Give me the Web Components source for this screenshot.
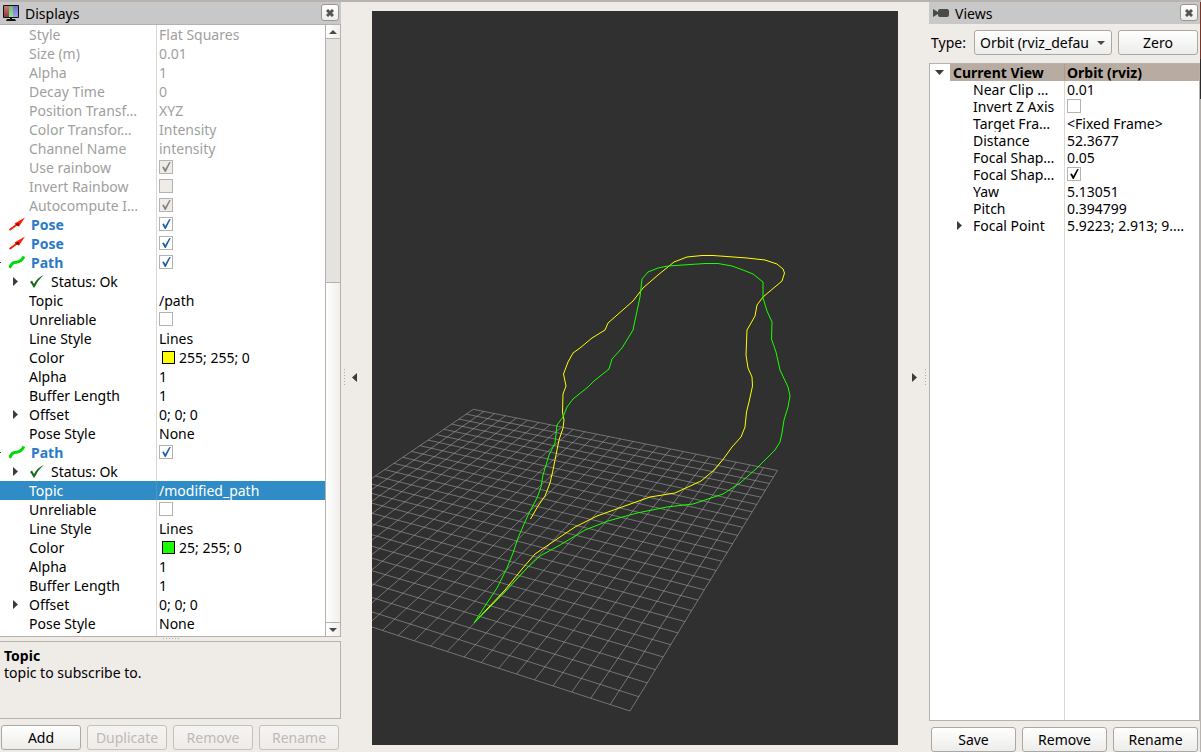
<!DOCTYPE html>
<html lang="en">
<head>
<meta charset="utf-8">
<title>RViz</title>
<style>
  html, body { margin: 0; height: 100%; }
  body {
    font: 14px/17px "Noto Sans", "Open Sans", sans-serif;
    color: #000;
    background: #efebe7;
    overflow: hidden;
  }
</style>
</head>
<body>
<rviz-window>
  <dock-panel slot="left" heading="Displays" icon="monitor" style="--dock-width: 341px">
    <property-tree scrollable label="Displays" style="--row: 19px; --name: 156px">
      <property-row off name="Style" value="Flat Squares"></property-row>
      <property-row off name="Size (m)" value="0.01"></property-row>
      <property-row off name="Alpha" value="1"></property-row>
      <property-row off name="Decay Time" value="0"></property-row>
      <property-row off name="Position Transf…" value="XYZ"></property-row>
      <property-row off name="Color Transfor…" value="Intensity"></property-row>
      <property-row off name="Channel Name" value="intensity"></property-row>
      <property-row off name="Use rainbow" check="on"></property-row>
      <property-row off name="Invert Rainbow" check="off"></property-row>
      <property-row off name="Autocompute I…" check="on"></property-row>
      <property-row display icon="pose" name="Pose" check="on"></property-row>
      <property-row display icon="pose" name="Pose" check="on"></property-row>
      <property-row display icon="path" name="Path" check="on" arrow="edge"></property-row>
      <property-row icon="ok" name="Status: Ok" arrow="closed"></property-row>
      <property-row name="Topic" value="/path"></property-row>
      <property-row name="Unreliable" check="off"></property-row>
      <property-row name="Line Style" value="Lines"></property-row>
      <property-row name="Color" value="255; 255; 0" swatch="#ffff00"></property-row>
      <property-row name="Alpha" value="1"></property-row>
      <property-row name="Buffer Length" value="1"></property-row>
      <property-row name="Offset" value="0; 0; 0" arrow="closed"></property-row>
      <property-row name="Pose Style" value="None"></property-row>
      <property-row display icon="path" name="Path" check="on" arrow="edge"></property-row>
      <property-row icon="ok" name="Status: Ok" arrow="closed"></property-row>
      <property-row selected name="Topic" value="/modified_path"></property-row>
      <property-row name="Unreliable" check="off"></property-row>
      <property-row name="Line Style" value="Lines"></property-row>
      <property-row name="Color" value="25; 255; 0" swatch="#19ff00"></property-row>
      <property-row name="Alpha" value="1"></property-row>
      <property-row name="Buffer Length" value="1"></property-row>
      <property-row name="Offset" value="0; 0; 0" arrow="closed"></property-row>
      <property-row name="Pose Style" value="None"></property-row>
    </property-tree>
    <help-box heading="Topic">topic to subscribe to.</help-box>
    <button-bar>
      <push-button>Add</push-button>
      <push-button disabled>Duplicate</push-button>
      <push-button disabled>Remove</push-button>
      <push-button disabled>Rename</push-button>
    </button-bar>
  </dock-panel>

  <side-handle slot="left" side="left"></side-handle>
  <scene-view></scene-view>
  <side-handle slot="right" side="right"></side-handle>

  <dock-panel slot="right" heading="Views" icon="camera" style="--dock-width: 271px">
    <view-type></view-type>
    <property-tree framed label="Views" style="--row: 17px; --name: 134px; --indent: 43px">
      <property-row root name="Current View" value="Orbit (rviz)" arrow="open"></property-row>
      <property-row name="Near Clip …" value="0.01"></property-row>
      <property-row name="Invert Z Axis" check="off"></property-row>
      <property-row name="Target Fra…" value="&lt;Fixed Frame&gt;"></property-row>
      <property-row name="Distance" value="52.3677"></property-row>
      <property-row name="Focal Shap…" value="0.05"></property-row>
      <property-row name="Focal Shap…" check="on" dark></property-row>
      <property-row name="Yaw" value="5.13051"></property-row>
      <property-row name="Pitch" value="0.394799"></property-row>
      <property-row name="Focal Point" value="5.9223; 2.913; 9.…" arrow="closed"></property-row>
    </property-tree>
    <button-bar inset>
      <push-button>Save</push-button>
      <push-button>Remove</push-button>
      <push-button>Rename</push-button>
    </button-bar>
  </dock-panel>
</rviz-window>

<script>
const ICONS = {
  monitor: `<svg width="16" height="16" viewBox="0 0 16 16"><defs><linearGradient id="r" x2="0" y2="1"><stop stop-color="#c87878"/><stop offset="1" stop-color="#8c3c3c"/></linearGradient><linearGradient id="g" x2="0" y2="1"><stop stop-color="#70b870"/><stop offset="1" stop-color="#90e890"/></linearGradient><linearGradient id="b" x2="0" y2="1"><stop stop-color="#7070c8"/><stop offset="1" stop-color="#a0a0f0"/></linearGradient></defs><rect width="16" height="13" rx="1" fill="#111"/><path fill="url(#r)" d="M1 1h5v11H1z"/><path fill="url(#g)" d="M6 1h4v11H6z"/><path fill="url(#b)" d="M10 1h5v11h-5z"/><path fill="#111" d="M7 13h2v1h3l1 2H3l1-2h3z"/></svg>`,
  camera: `<svg width="16" height="16" viewBox="0 0 16 16"><path fill="#4a4a4a" d="M0 4l5 3v2l-5 3zM7 4h7q2 0 2 2v4q0 2-2 2H7q-2 0-2-2V6q0-2 2-2z"/></svg>`,
  pose: `<svg width="16" height="16" viewBox="0 0 16 16"><path stroke="#f02000" stroke-width="2" d="M.5 13L8 7.500"/><path fill="#ff2000" d="M5.500 6.500L16 .5 10 9.500z"/><path fill="#900000" d="M6 7l4-1-.5 3.500z"/></svg>`,
  path: `<svg width="16" height="16" viewBox="0 0 16 16"><path fill="none" stroke="#00d80c" stroke-width="3" d="M.5 13C3 7.500 4 7.500 7.500 7.200S13 5.500 15 1.500"/></svg>`,
  ok: `<svg width="16" height="16" viewBox="0 0 16 16"><path fill="#1c6b1c" d="M1 8l2-1.500 2 3.500Q8 4 14.500 1 9 6 5.500 13.500H4.500Q3 10 1 8z"/></svg>`,
  closed: `<svg width="5" height="9" viewBox="0 0 5 9"><path fill="#3c3b37" d="M0 0l5 4.500L0 9z"/></svg>`,
  open: `<svg width="9" height="5" viewBox="0 0 9 5"><path fill="#3c3b37" d="M0 0h9L4.500 5z"/></svg>`,
  edge: `<svg width="1" height="1" viewBox="0 0 1 1"><path fill="#3c3b37" d="M0 0h1v1H0z"/></svg>`,
  up: `<svg width="8" height="4" viewBox="0 0 8 4"><path fill="#4a4944" d="M0 4h8L4 0z"/></svg>`,
  down: `<svg width="8" height="4" viewBox="0 0 8 4"><path fill="#4a4944" d="M0 0h8L4 4z"/></svg>`,
  cross: `<svg width="8" height="8" viewBox="0 0 8 8"><path stroke="#555" stroke-width="3" d="M1 1l6 6M7 1L1 7"/></svg>`
};

class Part extends HTMLElement {
  connectedCallback() {
    if (this.shadowRoot) return;
    this.attachShadow({ mode: 'open' }).innerHTML =
      `<style>*{box-sizing:border-box}svg{display:block;flex:none}${this.css()}</style>${this.html()}`;
  }
  get(n) { return (this.getAttribute(n) || '').replace(/&/g, '&amp;').replace(/</g, '&lt;'); }
  css() { return ''; }
  html() { return '<slot></slot>'; }
}

const BUTTON = `
  button, select {
    font: inherit; color: #000; margin: 0; height: 25px;
    border: 1px solid #aba7a3; border-radius: 3px;
    background: linear-gradient(#fff, #ececea);
  }`;

customElements.define('rviz-window', class extends Part {
  css() { return `
    :host { display: flex; height: 100vh; min-height: 700px; box-sizing: border-box; border-top: 2px solid #b8b3ae;
      border-image: linear-gradient(#b8b3ae 50%, #f5f2ef 50%) 2; border-width: 2px 0 0; }
    main { flex: 1; min-width: 0; display: flex; padding: 9px 0 7px; }
    .edge { width: 1px; background: linear-gradient(#7b3325 57px, #2b2b2b 57px 97px, #b8b3ae 97px); }`; }
  html() { return `<slot name="left"></slot><main><slot></slot></main><slot name="right"></slot><div class="edge"></div>`; }
});

customElements.define('dock-panel', class extends Part {
  css() { return `
    :host { display: flex; flex-direction: column; width: var(--dock-width); flex: none; min-height: 0; }
    header { display: flex; align-items: center; gap: 6px; height: 22px; flex: none; padding: 0 2px 0 3px; background: #c8c8c8; }
    :host([slot="right"]) header { padding-left: 4px; }
    h2 { flex: 1; margin: 0; font: inherit; }
    button { width: 18px; height: 17px; margin-bottom: 1px; padding: 0; display: grid; place-items: center;
      border: 1px solid #9b9894; border-radius: 3px; background: linear-gradient(#fff, #ececea); }`; }
  html() { return `<header>${ICONS[this.get('icon')]}<h2>${this.get('heading')}</h2>
    <button aria-label="Close">${ICONS.cross}</button></header><slot></slot>`; }
});

customElements.define('property-tree', class extends Part {
  css() { return `
    :host { flex: 1; min-height: 0; display: flex; background: #fff; border: solid #b5b1ad; border-width: 1px 1px 1px 0; }
    :host([framed]) { border-width: 1px; }
    .rows { flex: 1; min-width: 0; display: flex; flex-direction: column; overflow: hidden; }
    .rest { flex: 1; margin-left: var(--name); border-left: 1px solid #d8d8d8; }
    .bar { width: 15px; display: flex; flex-direction: column; border-left: 1px solid #b5b1ad; background: #e4e3df; }
    .bar div { display: grid; place-items: center; background: linear-gradient(90deg, #fff, #f0efed); }
    .end { height: 14px; }
    .end:first-child { border-bottom: 1px solid #b5b1ad; }
    .end:last-child { border-top: 1px solid #b5b1ad; }
    .gap { flex: 243; }
    .bar .thumb { flex: 340; border-top: 1px solid #b5b1ad; }`; }
  html() { return `<div class="rows" role="tree" aria-label="${this.get('label')}"><slot></slot><div class="rest"></div></div>` +
    (this.hasAttribute('scrollable') ? `<div class="bar"><div class="end">${ICONS.up}</div><span class="gap"></span><div class="thumb"></div><div class="end">${ICONS.down}</div></div>` : ''); }
});

customElements.define('property-row', class extends Part {
  css() { return `
    :host { display: flex; flex: none; height: var(--row); line-height: var(--row); white-space: nowrap; }
    :host([off]) { color: #a09f9e; }
    :host([display]) label { color: #2a7ac8; font-weight: bold; }
    :host([selected]) { background: #308cc6; color: #fff; }
    :host([root]) { font-weight: bold; background: linear-gradient(90deg, #fff 20px, #b8aca2 20px); }
    .name { width: var(--name); flex: none; display: flex; align-items: center; overflow: hidden; }
    .arrow { width: var(--indent, 29px); flex: none; display: flex; justify-content: flex-end; padding-right: 11px; }
    :host([display]) .arrow { width: 9px; justify-content: flex-start; padding: 0; }
    :host([root]) .arrow { width: 23px; padding-right: 9px; }
    .icon { margin-right: 6px; }
    .value { flex: 1; min-width: 0; display: flex; align-items: center; border-left: 1px solid #d8d8d8; padding-left: 2px; overflow: hidden; }
    :host([selected]) .value { border-color: #4f93c0; }
    :host([root]) .value { border-color: #a89d94; }
    i { width: 13px; height: 13px; margin: 0 4px 0 3px; border: 1px solid #000; }
    input { appearance: none; width: 14px; height: 14px; margin: 0 0 1px; border: 1px solid #b5b3b0; background: #fff; color: #1f5fa0; }
    input:disabled { background: #efebe7; color: #858380; }
    :host([dark]) input { color: #000; }
    input:checked::before { content: ""; display: block; width: 12px; height: 12px; background: currentColor;
      clip-path: polygon(18% 50%, 32% 46%, 44% 66%, 76% 10%, 90% 8%, 48% 92%, 40% 92%); }`; }
  html() {
    const check = this.get('check'), tag = check ? 'label' : 'span', swatch = this.get('swatch');
    const icon = this.get('icon') ? `<span class="icon">${ICONS[this.get('icon')]}</span>` : '';
    const value = check
      ? `<input id="v" type="checkbox" ${check === 'on' ? 'checked' : ''} ${this.hasAttribute('off') ? 'disabled' : ''}>`
      : (swatch ? `<i style="background:${swatch}"></i>` : '') + `<span>${this.get('value')}</span>`;
    return `<div class="name"><span class="arrow">${ICONS[this.get('arrow')] || ''}</span>${icon}
      <${tag} ${check ? 'for="v"' : ''}>${this.get('name')}</${tag}></div><div class="value">${value}</div>`;
  }
});

customElements.define('help-box', class extends Part {
  css() { return `
    :host { display: block; flex: none; }
    .grip { width: 16px; height: 1px; margin: 1px auto 2px; background: repeating-linear-gradient(90deg, #b0aca8 0 1px, transparent 1px 3px); }
    section { height: 78px; padding: 5px 4px; border: 1px solid #b5b1ad; border-left: 0; }
    h3 { margin: 0; font: inherit; font-weight: bold; }
    p { margin: 0; }`; }
  html() { return `<div class="grip"></div><section><h3>${this.get('heading')}</h3><p><slot></slot></p></section>`; }
});

customElements.define('button-bar', class extends Part {
  css() { return `
    :host { display: flex; gap: 6px; flex: none; padding: 6px 2px 2px 1px; }
    :host([inset]) { padding: 6px 2px 0; }`; }
});

customElements.define('push-button', class extends Part {
  css() { return `
    :host { display: flex; flex: 1; min-width: 0; }
    ${BUTTON}
    button { flex: 1; padding: 0; }
    button:disabled { color: #bdbab7; border-color: #c4c0bc; background: linear-gradient(#f6f4f2, #eeebe8); }`; }
  html() { return `<button ${this.hasAttribute('disabled') ? 'disabled' : ''}><slot></slot></button>`; }
});

customElements.define('view-type', class extends Part {
  css() { return `
    :host { display: flex; align-items: center; gap: 6px; flex: none; padding: 6px 2px 8px; }
    ${BUTTON}
    label { width: 37px; white-space: nowrap; }
    .combo { flex: 1; min-width: 0; display: grid; align-items: center; }
    .combo > * { grid-area: 1 / 1; }
    .combo svg { justify-self: end; margin-right: 7px; pointer-events: none; }
    select { appearance: none; width: 100%; padding: 0 22px 0 5px; }
    push-button { flex: 0 0 80px; }`; }
  html() { return `<label for="t">Type:</label><div class="combo"><select id="t"><option>Orbit (rviz_default)</option></select>${ICONS.down}</div><push-button>Zero</push-button>`; }
});

customElements.define('side-handle', class extends Part {
  css() { return `
    :host { display: flex; align-items: center; gap: 7px; width: 31px; flex: none; box-sizing: border-box; padding: 0 3px; }
    :host([side="right"]) { flex-direction: row-reverse; gap: 8px; }
    :host([side="left"]) svg { transform: scaleX(-1); }
    span { width: 1px; height: 16px; background: repeating-linear-gradient(#b0aca8 0 1px, transparent 1px 3px); }`; }
  html() { return `<span></span>${ICONS.closed}`; }
});

/* Perspective ground grid with the two published paths drawn over it. */
customElements.define('scene-view', class extends Part {
  css() { return `
    :host { display: flex; flex: 1; min-width: 0; background: #303030; overflow: hidden; }
    svg { flex: 1; width: 100%; height: 100%; }
    path, polyline { fill: none; stroke-width: 1; }`; }
  html() {
    const cells = 25;
    const [d, a, b, c] = [[473.3, 409.3], [777.5, 470.5], [630, 711], [224.2, 578.9]];
    const x1 = a[0] - b[0], y1 = a[1] - b[1], x2 = c[0] - b[0], y2 = c[1] - b[1];
    const sx = d[0] - a[0] + b[0] - c[0], sy = d[1] - a[1] + b[1] - c[1];
    const det = x1 * y2 - x2 * y1;
    const g = (sx * y2 - x2 * sy) / det, h = (x1 * sy - sx * y1) / det;
    const at = (u, v) => {
      const w = 1 + g * u + h * v;
      return [0, 1].map(k => ((d[k] + (a[k] - d[k] + g * a[k]) * u + (c[k] - d[k] + h * c[k]) * v) / w).toFixed(2)).join(' ');
    };
    let grid = '';
    for (let i = 0; i <= cells; i++) {
      const t = i / cells;
      grid += `M${at(t, 0)}L${at(t, 1)}M${at(0, t)}L${at(1, t)}`;
    }
    const green = '474,623 485,606 497,588 507,568 513,553 518,538 528,515 537,498 541,487 543,475 549,455 555,443 557,425 563,417 567,407 573,399 588,387 594,381 609,369 612,359 622,348 633,330 637,311 640,297 642,279 648,272 658,268 668,266 705,263.500 718,263.500 732,266 743,270 753,274 763,282 763,298 767,311 772,322 771.500,339 776,352 780,370 788,387 790,396 788,407 784,420 782,433 780,442 775,450 757,468 740,483 723,494 693,504 667,507 637,513 608,521 585,530 560,545 540,556 527,568 505,592 474,623';
    const yellow = '530.500,519 538,506 545,496 550,483 553,470 556,455 559,440 563,428 564,420 562.500,412 563,394 566,386 563.500,374 568,362 573,353 580,348 592,338 605,330 608,323 633,301 643,288 658,275 674,262 687,257 702,255.500 713,255.500 747,258 765,260 777,264 783,269 784.500,273 782,281 763,297 757,305 755,316 747,330 746,355 748,368 752,377 752.500,386 749,402 746.500,412 745,427 741,437 732,447 723,459.500 713,471 701,481 675,493 650,497 622,507 597,516 575,527 560,537 535,554 522,569 505,590 488,608 474,623';
    return `<svg viewBox="372 11 526 734" preserveAspectRatio="xMidYMid slice" role="img" aria-label="3D view">
      <path stroke="#a0a0a4" stroke-opacity=".6" d="${grid}"/>
      <polyline stroke="#ffff00" points="${yellow}"/>
      <polyline stroke="#19ff00" points="${green}"/></svg>`;
  }
});
</script>
</body>
</html>
